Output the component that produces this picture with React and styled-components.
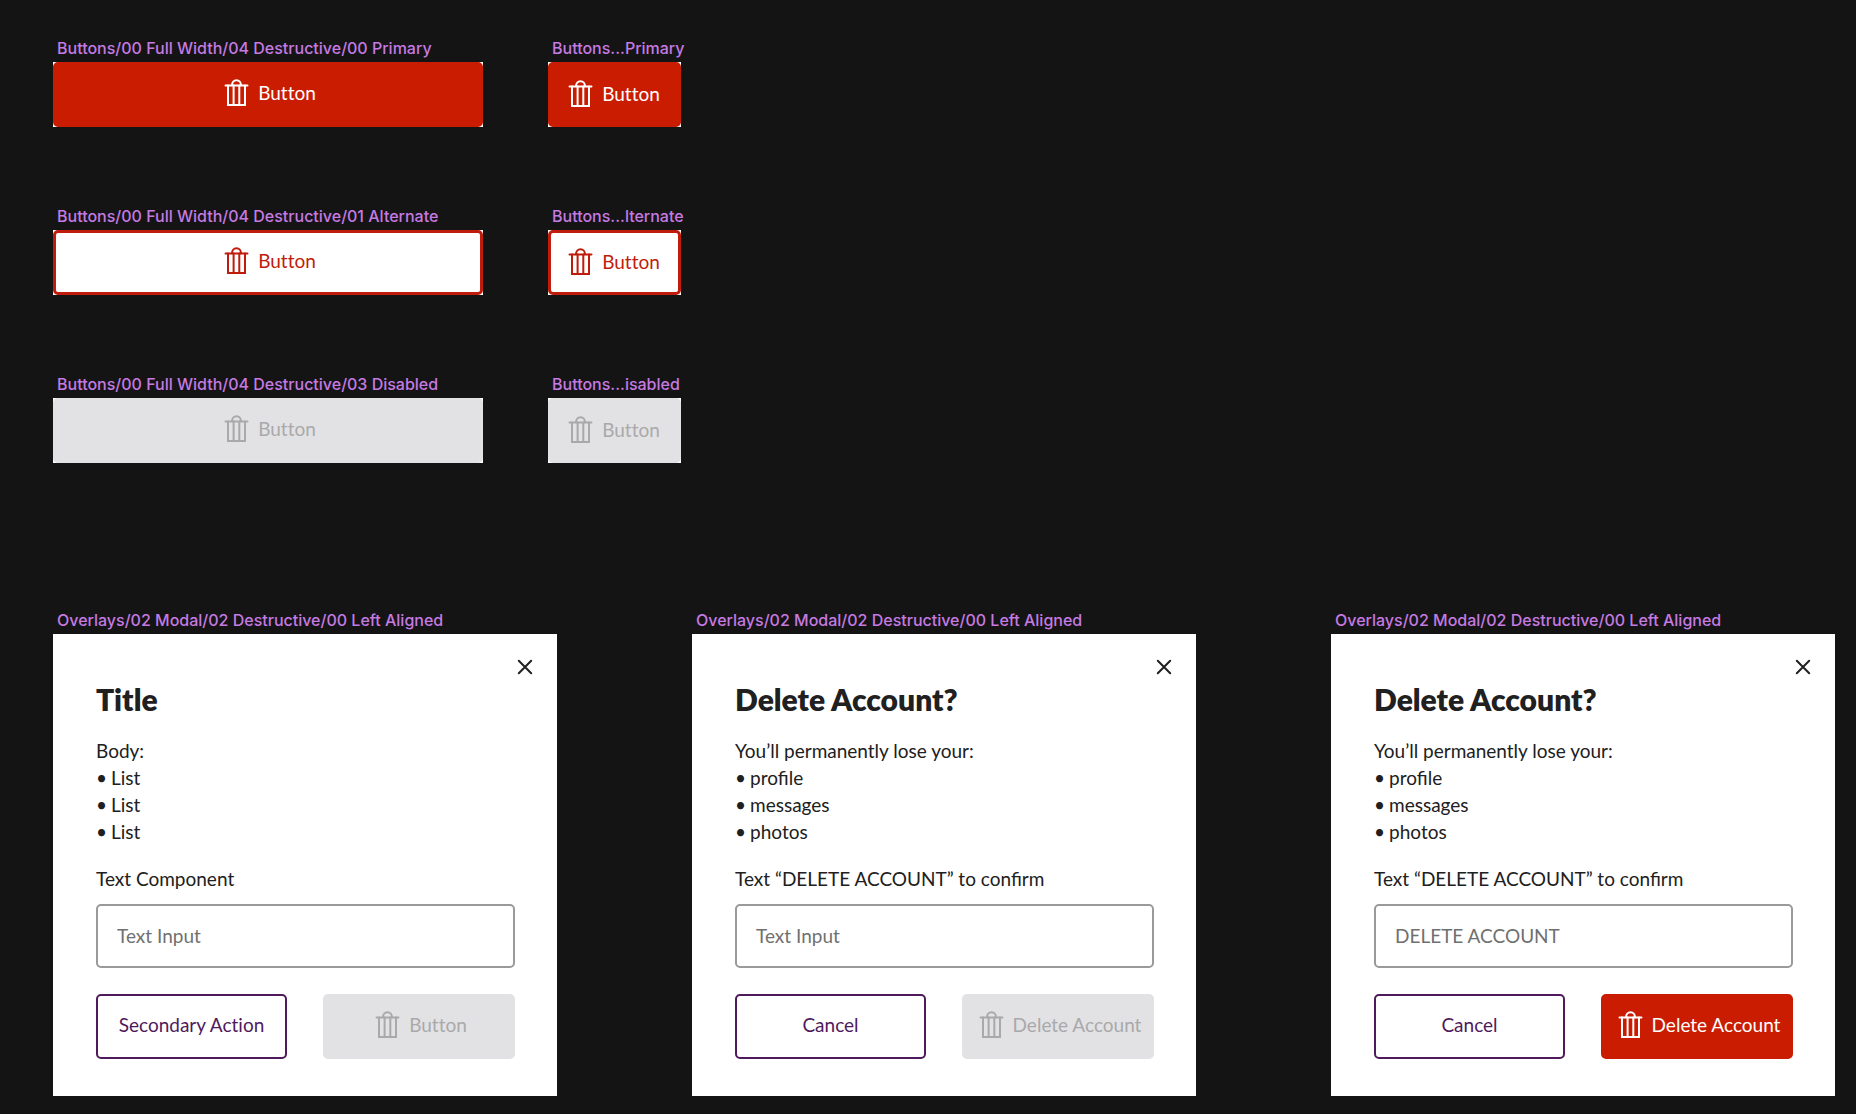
import React, { useId, useState } from 'react';
import styled, { createGlobalStyle, css } from 'styled-components';

const GlobalStyle = createGlobalStyle`
  * {
    box-sizing: border-box;
  }

  body {
    margin: 0;
    background-color: #141414;
    color: #202020;
    font-family: Lato, "Liberation Sans", sans-serif;
    font-size: 19px;
    line-height: 27px;
  }
`;

const Canvas = styled.main`
  padding: 38px 21px 18px 53px;
`;

const ButtonList = styled.section`
  display: flex;
  flex-direction: column;
  gap: 79px;
  margin-bottom: 147px;
`;

const ButtonRow = styled.div`
  display: flex;
  gap: 65px;
`;

const ModalList = styled.section`
  display: grid;
  grid-template-columns: repeat(3, minmax(0, 1fr));
  gap: 135px;
`;

const Artboard = styled.figure`
  display: flex;
  flex-direction: column;
  gap: 4px;
  min-width: 0;
  margin: 0;
  flex: ${({ $wide }) => ($wide ? '0 1 430px' : '0 0 133px')};
`;

const ArtboardName = styled.figcaption`
  padding-left: 4px;
  color: #c67ae2;
  font-family: Inter, "Liberation Sans", sans-serif;
  font-size: 16px;
  font-weight: 500;
  line-height: 20px;
  white-space: nowrap;
`;

const Frame = styled.div`
  background-color: #fff;
`;

const variants = {
  primary: css`
    background-color: #ca1c00;
    border: 2px solid #ca1c00;
    color: #fff;
  `,
  alternate: css`
    background-color: #fff;
    border: 3px solid #bf1c0c;
    color: #bf1c0c;
  `,
  secondary: css`
    background-color: #fff;
    border: 2px solid #4f1a5c;
    color: #4f1a5c;
  `,
};

const Button = styled.button`
  display: flex;
  align-items: center;
  justify-content: center;
  gap: 6px;
  width: 100%;
  height: 65px;
  padding: ${({ $compact }) => ($compact ? '0 5px 2px 0' : '0 0 4px')};
  border-radius: 5px;
  font: inherit;
  font-variant-ligatures: none;
  white-space: nowrap;
  cursor: pointer;
  ${({ $variant }) => variants[$variant]}

  &:disabled {
    background-color: #e2e2e4;
    border-color: #e2e2e4;
    color: #a9a9ab;
    cursor: default;
  }
`;

const Icon = styled.svg`
  flex: none;
  width: 32px;
  height: 32px;
  fill: none;
  stroke: currentColor;
  stroke-width: 2;
  stroke-linecap: round;
  stroke-linejoin: round;
`;

const Modal = styled.form`
  position: relative;
  padding: 47px 42px 37px 43px;
  background-color: #fff;
`;

const CloseButton = styled.button`
  position: absolute;
  top: 17px;
  right: 16px;
  display: flex;
  padding: 0;
  border: 0;
  background: none;
  color: #202020;
  cursor: pointer;
`;

const Title = styled.h2`
  margin: 0 0 20px;
  font-size: 30px;
  font-weight: 800;
  line-height: 36px;
`;

const Text = styled.p`
  margin: 0;
`;

const List = styled.ul`
  margin: 0 0 20px;
  padding: 0;
  list-style: none;

  li {
    display: flex;
    gap: 4px;
  }

  li::before {
    content: "•";
  }
`;

const Label = styled.label`
  display: block;
  margin-bottom: 12px;
`;

const Input = styled.input`
  display: block;
  width: 100%;
  height: 64px;
  margin-bottom: 26px;
  padding: 0 19px 2px;
  border: 2px solid #9a9a9c;
  border-radius: 5px;
  background-color: #fff;
  color: #707070;
  font: inherit;

  &::placeholder {
    color: #707070;
    opacity: 1;
  }
`;

const Actions = styled.div`
  display: grid;
  grid-template-columns: 191fr 192fr;
  gap: 36px;
`;

const TrashIcon = () => (
  <Icon viewBox="0 0 32 32" aria-hidden="true">
    <path d="M5.5 8.5h22" />
    <path d="M8 8.5v19.4h17V8.5" strokeLinejoin="miter" />
    <path d="M13.6 8.5v19.4M19.3 8.5v19.4" />
    <path d="M12 8.3c0-3 1.9-5 4.5-5s4.5 2 4.5 5" />
  </Icon>
);

const CloseIcon = () => (
  <Icon viewBox="0 0 32 32" aria-hidden="true">
    <path d="M9.8 9.8l12.4 12.4M22.2 9.8L9.8 22.2" />
  </Icon>
);

const ButtonBoard = ({ name, wide, variant, disabled }) => (
  <Artboard $wide={wide}>
    <ArtboardName>{name}</ArtboardName>
    <Frame>
      <Button type="button" $variant={variant} $compact={!wide} disabled={disabled}>
        <TrashIcon />
        Button
      </Button>
    </Frame>
  </Artboard>
);

const ModalBoard = ({ title, body, items, label, value, confirm, cancel, action }) => {
  const [text, setText] = useState(value || '');
  const id = useId();

  return (
    <Artboard>
      <ArtboardName>Overlays/02 Modal/02 Destructive/00 Left Aligned</ArtboardName>
      <Modal onSubmit={(e) => e.preventDefault()}>
        <CloseButton type="button" aria-label="Close">
          <CloseIcon />
        </CloseButton>
        <Title>{title}</Title>
        <Text>{body}</Text>
        <List>
          {items.map((item, index) => (
            <li key={index}>{item}</li>
          ))}
        </List>
        <Label htmlFor={id}>{label}</Label>
        <Input
          id={id}
          type="text"
          placeholder="Text Input"
          value={text}
          onChange={(e) => setText(e.target.value)}
        />
        <Actions>
          <Button type="button" $variant="secondary">{cancel}</Button>
          <Button type="submit" $variant="primary" disabled={text !== confirm}>
            <TrashIcon />
            {action}
          </Button>
        </Actions>
      </Modal>
    </Artboard>
  );
};

const buttons = [
  { name: 'Buttons/00 Full Width/04 Destructive/00 Primary', short: 'Buttons...Primary', variant: 'primary' },
  { name: 'Buttons/00 Full Width/04 Destructive/01 Alternate', short: 'Buttons...lternate', variant: 'alternate' },
  { name: 'Buttons/00 Full Width/04 Destructive/03 Disabled', short: 'Buttons...isabled', variant: 'primary', disabled: true },
];

const deleteAccount = {
  title: 'Delete Account?',
  body: 'You’ll permanently lose your:',
  items: ['profile', 'messages', 'photos'],
  label: 'Text “DELETE ACCOUNT” to confirm',
  confirm: 'DELETE ACCOUNT',
  cancel: 'Cancel',
  action: 'Delete Account',
};

const App = () => (
  <>
    <GlobalStyle />
    <Canvas>
      <ButtonList>
        {buttons.map(({ name, short, variant, disabled }) => (
          <ButtonRow key={name}>
            <ButtonBoard wide name={name} variant={variant} disabled={disabled} />
            <ButtonBoard name={short} variant={variant} disabled={disabled} />
          </ButtonRow>
        ))}
      </ButtonList>
      <ModalList>
        <ModalBoard
          title="Title"
          body="Body:"
          items={['List', 'List', 'List']}
          label="Text Component"
          cancel="Secondary Action"
          action="Button"
        />
        <ModalBoard {...deleteAccount} />
        <ModalBoard {...deleteAccount} value="DELETE ACCOUNT" />
      </ModalList>
    </Canvas>
  </>
);

export default App;
